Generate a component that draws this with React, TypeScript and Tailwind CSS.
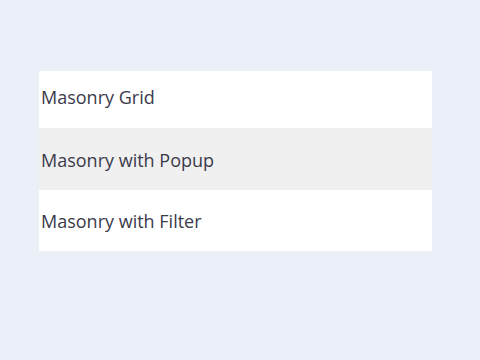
const items = [
  { label: 'Masonry Grid', h: 'h-[57px] pb-[4px]', bg: 'bg-white' },
  { label: 'Masonry with Popup', h: 'h-[62px] pt-[3px]', bg: 'bg-[#f0f0f0]' },
  { label: 'Masonry with Filter', h: 'h-[61px] pt-[1px]', bg: 'bg-white' },
]

export default function App() {
  return (
    <div className="w-[480px] h-[360px] bg-[#ebeff8] pt-[71px] pl-[39px]">
      <ul className="w-[393px] flex flex-col">
        {items.map((item) => (
          <li
            key={item.label}
            className={`${item.h} ${item.bg} flex items-center pl-[2px] text-[18px] text-[#3a3a4a] font-['Open_Sans',sans-serif]`}
          >
            {item.label}
          </li>
        ))}
      </ul>
    </div>
  )
}
